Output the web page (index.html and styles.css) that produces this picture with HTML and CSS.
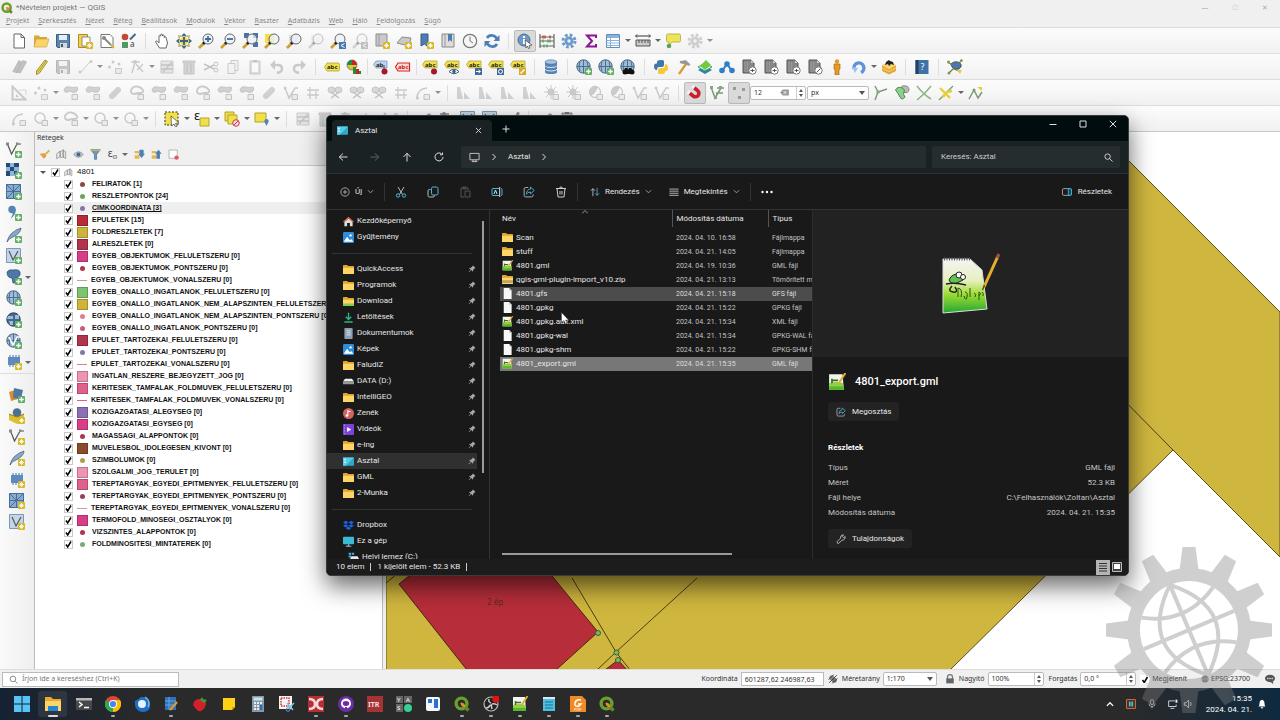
FILE: index.html
```html
<!doctype html>
<html lang="hu">
<head>
    <meta charset="utf-8">
    <title>*Névtelen projekt — QGIS</title>
    <link rel="stylesheet" href="styles.css">
</head>
<body>
<!-- icon set -->
<svg class="defs" aria-hidden="true">
    <symbol id="plus" viewBox="0 0 16 16"><rect x="9" y="9" width="7" height="7" rx="1" fill="#5fae63"/><path d="M12.500 10.200v4.600M10.200 12.500h4.600" stroke="#fff" stroke-width="1.500"/></symbol>
    <symbol id="star" viewBox="0 0 16 16"><rect x="9" y="9" width="7" height="7" rx="1" fill="#d9b92e"/><path d="M12.500 10v5M10 12.500h5M11 11l3 3M14 11l-3 3" stroke="#fff" stroke-width=".8"/></symbol>
    <symbol id="qgis" viewBox="0 0 16 16"><circle cx="7.500" cy="7.500" r="5.400" fill="none" stroke="#6a9f2c" stroke-width="3.400"/><path d="M8 8l6.500 6.500" stroke="#5c8c25" stroke-width="3.600"/><path d="M7 7l4 4" stroke="#ee8d28" stroke-width="2.400"/></symbol>
    <symbol id="new" viewBox="0 0 16 16"><path d="M3 1h7l3.500 3.500V15H3z" fill="#fff" stroke="#666"/><path d="M10 1v3.500h3.500" fill="none" stroke="#666"/></symbol>
    <symbol id="open" viewBox="0 0 16 16"><path d="M1 14V2.500h5l1 1.500h7v2" fill="#d7a93a"/><path d="M1 14L3 6h13l-2.500 8z" fill="#fbd56b" stroke="#c59a31" stroke-width=".6"/></symbol>
    <symbol id="save" viewBox="0 0 16 16"><path d="M1.500 1.500h13v13h-12l-1-1z" fill="#5a83ad" stroke="#3c5f85"/><path d="M4 2h8v5H4z" fill="#e8eef4"/><path d="M5 10h7v5H5z" fill="#d6d9dc"/><path d="M6 11h2v3H6z" fill="#456"/></symbol>
    <symbol id="pagenew" viewBox="0 0 16 16"><path d="M1.500 1.500h9v13h-9z" fill="#f3d34b" stroke="#a88d2a"/><path d="M5 4h8v9H5z" fill="#fff" stroke="#777" stroke-width=".8"/><use href="#star"/></symbol>
    <symbol id="pagetool" viewBox="0 0 16 16"><path d="M2 1.500h9l3 3v10H2z" fill="#fff" stroke="#777"/><path d="M5 5l7 7" stroke="#888" stroke-width="2"/><circle cx="5" cy="5" r="2" fill="#888"/><path d="M12 12l3 3" stroke="#d9b92e" stroke-width="2"/></symbol>
    <symbol id="style" viewBox="0 0 16 16"><circle cx="4" cy="4" r="3.300" fill="#c24a35"/><path d="M1 9h6v6H1z" fill="#4f9a63"/><path d="M14.500 1L9 6.500" stroke="#3d6d86" stroke-width="2"/><text x="9" y="14" font-size="8" fill="#333">a</text></symbol>
    <symbol id="hand" viewBox="0 0 16 16"><path d="M5.500 15L2 9.500C1 8 2.500 7.400 3.500 8.500L5 10V3.200c0-1.200 1.700-1.200 1.700 0V2c0-1.300 1.800-1.300 1.800 0v1c0-1.300 1.800-1.200 1.800 0v1.500c0-1.200 1.700-1.200 1.700 0L13.500 10 12 15z" fill="#fff" stroke="#555" stroke-width=".9"/></symbol>
    <symbol id="pansel" viewBox="0 0 16 16"><path d="M8 0l3 3.500H5zM8 16l3-3.500H5zM0 8l3.500-3v6zM16 8l-3.500-3v6z" fill="#3a5f90"/><path d="M8 2.500L13.500 8 8 13.500 2.500 8z" fill="#f0dc3c"/><path d="M8 4v8M4 8h8" stroke="#3a5f90" stroke-width="1.800"/><path d="M2.500 2.500l2.500.5-2 2zM13.500 2.500L11 3l2 2zM2.500 13.500L5 13l-2-2zM13.500 13.500L11 13l2-2z" fill="#e0cc35" stroke="#9c8f2a" stroke-width=".5"/></symbol>
    <symbol id="lens" viewBox="0 0 16 16"><path d="M6 10l-5 5" stroke="#c9a02c" stroke-width="2.600"/><path d="M6.500 9.500L5 11" stroke="#222" stroke-width="2.600"/><circle cx="10" cy="6" r="5" fill="#e9f1f8" fill-opacity=".75" stroke="#666"/></symbol>
    <symbol id="zin" viewBox="0 0 16 16"><use href="#lens"/><path d="M10 3v6M7 6h6" stroke="#3c6da5" stroke-width="1.800"/></symbol>
    <symbol id="zout" viewBox="0 0 16 16"><use href="#lens"/><path d="M7 6h6" stroke="#3c6da5" stroke-width="1.800"/></symbol>
    <symbol id="zfull" viewBox="0 0 16 16"><path d="M2 0h5v5H2zM11 0h5v5h-5zM11 9h5v5h-5z" fill="#4a73a6"/><use href="#lens"/></symbol>
    <symbol id="zsel" viewBox="0 0 16 16"><path d="M1 1h9v9H1z" fill="#f1e04b"/><use href="#lens"/></symbol>
    <symbol id="zlay" viewBox="0 0 16 16"><path d="M3 2h9v9H3z" fill="#ddd"/><use href="#lens"/></symbol>
    <symbol id="zlast" viewBox="0 0 16 16"><use href="#lens"/><path d="M9 9h7v7H9z" fill="#4679b0"/><path d="M14.500 10.500l-3.500 2 3.500 2" fill="none" stroke="#fff"/></symbol>
    <symbol id="mapnew" viewBox="0 0 16 16"><path d="M2 1h11v12H2z" fill="#c9c9c9" stroke="#8d8d8d"/><path d="M5 1v12" stroke="#999"/><use href="#star"/></symbol>
    <symbol id="map3d" viewBox="0 0 16 16"><path d="M1 10l5-6 9 1-2 8z" fill="#c9c9c9" stroke="#8d8d8d"/><use href="#star"/></symbol>
    <symbol id="bmnew" viewBox="0 0 16 16"><path d="M3 1h7v13l-3.500-3L3 13z" fill="#4f7db1" stroke="#355d8c"/><use href="#star"/></symbol>
    <symbol id="bm" viewBox="0 0 16 16"><path d="M2 1h12v13H2z" fill="#ddd" stroke="#888"/><path d="M8 1h4v8L10 7 8 9z" fill="#4f7db1"/><path d="M5 1v13" stroke="#999"/></symbol>
    <symbol id="clock" viewBox="0 0 16 16"><circle cx="8" cy="8" r="6.700" fill="#f6f6f6" stroke="#777" stroke-width="1.200"/><path d="M8 3.500V8l3 2" fill="none" stroke="#777"/></symbol>
    <symbol id="refresh" viewBox="0 0 16 16"><path d="M13 6.500A5.500 5.500 0 0 0 3 5M3 9.500A5.500 5.500 0 0 0 13 11" fill="none" stroke="#4a80b8" stroke-width="2.600"/><path d="M15.500 2v6h-6zM.5 14V8h6z" fill="#4a80b8"/></symbol>
    <symbol id="ident" viewBox="0 0 16 16"><circle cx="7" cy="7" r="6" fill="#6f98c4" stroke="#44719f"/><path d="M7 6v5M7 3v2" stroke="#fff" stroke-width="2"/><path d="M8 7l7 5-3 .5 1 2.500-1.500.5-1-2.500-1.500 2z" fill="#fff" stroke="#444" stroke-width=".7"/></symbol>
    <symbol id="abacus" viewBox="0 0 16 16"><path d="M1 1v14M15 1v14M1 4h14M1 8h14M1 13h14" stroke="#666" stroke-width="1.200"/><path d="M4 2.500v3M6 2.500v3M11 2.500v3" stroke="#c9453c" stroke-width="1.500"/><path d="M4 6.500v3M9 6.500v3M11 6.500v3M5 11.500v3M8 11.500v3" stroke="#5ba35b" stroke-width="1.500"/></symbol>
    <symbol id="gear" viewBox="0 0 16 16"><circle cx="8" cy="8" r="6" fill="none" stroke="#6c9bcb" stroke-width="3" stroke-dasharray="2.700 2"/><circle cx="8" cy="8" r="4.500" fill="#6c9bcb"/><circle cx="8" cy="8" r="1.700" fill="#eee"/></symbol>
    <symbol id="sigma" viewBox="0 0 16 16"><path d="M13 5V2.500H4L9 8l-5 5.500h9V11" fill="none" stroke="#8a1592" stroke-width="2"/></symbol>
    <symbol id="table" viewBox="0 0 16 16"><path d="M1.500 1.500h13v13h-13z" fill="#fff" stroke="#5d8cbd"/><path d="M2 2h12v3H2z" fill="#8ab3dc"/><path d="M1.500 7.500h13M1.500 10h13M1.500 12.500h13M5.500 5v9" stroke="#8ab3dc"/></symbol>
    <symbol id="ruler" viewBox="0 0 16 16"><path d="M1 3h14M2 1.500L.5 3 2 4.500M14 1.500L15.500 3 14 4.500" fill="none" stroke="#333"/><path d="M1 7h14v6H1z" fill="#c9c9c9" stroke="#555"/><path d="M4 7v3M7 7v3M10 7v3M13 7v3" stroke="#555"/></symbol>
    <symbol id="tip" viewBox="0 0 16 16"><path d="M3 1h11q1.500 0 1.500 1.500v5Q15.500 9 14 9H7l-3 4V9H3Q1.500 9 1.500 7.500v-5Q1.500 1 3 1z" fill="#eee35c" stroke="#b3a733" stroke-width=".8"/><circle cx="4" cy="13" r="2.300" fill="#5ba35b"/></symbol>
    <symbol id="pencil" viewBox="0 0 16 16"><path d="M12 1l2.500 1.500L6.500 14 3.500 15.500V12z" fill="#efd54a" stroke="#8d7a28" stroke-width=".8"/><path d="M5 13l8-11" stroke="#b89d30"/></symbol>
    <symbol id="pencils" viewBox="0 0 16 16"><path d="M2 13L8 2l2 1-5 11M6 14l6-12 3 1-6 11" fill="#777" stroke="#666" stroke-width="1.500"/></symbol>
    <symbol id="line" viewBox="0 0 16 16"><path d="M3 14L13 3" stroke="#888"/><circle cx="3" cy="13" r="1.500" fill="#888"/><circle cx="14" cy="2.500" r="1.500" fill="#888"/></symbol>
    <symbol id="dots" viewBox="0 0 16 16"><g fill="#888"><circle cx="2.500" cy="8" r="1.500"/><circle cx="6" cy="3" r="1.500"/><circle cx="12" cy="5" r="1.500"/></g><path d="M8.500 9.500h6v5h-6z" fill="#ddd" stroke="#888"/></symbol>
    <symbol id="node" viewBox="0 0 16 16"><path d="M2 3h9M6 3L3 14M7 5l7 8M14 5l-6 6" fill="none" stroke="#888" stroke-width="1.400"/><circle cx="6" cy="3" r="2" fill="#888"/></symbol>
    <symbol id="form" viewBox="0 0 16 16"><path d="M2 2h12v12H2z" fill="#ccc" stroke="#888"/><path d="M2 6h12M2 10h12M4 13l9-10" stroke="#777" stroke-width="1.300"/></symbol>
    <symbol id="trash" viewBox="0 0 16 16"><path d="M3 5h10v10H3zM2 2h12v2H2z" fill="#aaa" stroke="#777"/><path d="M6 6v8M10 6v8" stroke="#666"/></symbol>
    <symbol id="cut" viewBox="0 0 16 16"><path d="M1 5l10 5M1 11l10-5" stroke="#777" stroke-width="1.500"/><circle cx="13" cy="5" r="2" fill="none" stroke="#777"/><circle cx="13" cy="11" r="2" fill="none" stroke="#777"/></symbol>
    <symbol id="copy" viewBox="0 0 16 16"><path d="M6 1.500h7v10H6z" fill="#eee" stroke="#888"/><path d="M3 4.500h7v10H3z" fill="#eee" stroke="#888"/></symbol>
    <symbol id="paste" viewBox="0 0 16 16"><path d="M3 2h10v13H3z" fill="#bbb" stroke="#888"/><path d="M5 4h6v9H5z" fill="#fff"/><path d="M6 1h4v2H6z" fill="#777"/></symbol>
    <symbol id="undo" viewBox="0 0 16 16"><path d="M3 6h6q4 0 4 4 0 3-5 4" fill="none" stroke="#888" stroke-width="2.500"/><path d="M6 1v10L1 6z" fill="#888"/></symbol>
    <symbol id="redo" viewBox="0 0 16 16"><use href="#undo" transform="matrix(-1 0 0 1 16 0)"/></symbol>
    <symbol id="abc" viewBox="0 0 16 16"><path d="M3 4h11q1.500 0 1.500 1.500v5Q15.500 12 14 12H3L.5 8z" fill="#f0e14a" stroke="#a99b2c" stroke-width=".7"/><text x="3" y="10" font-size="6" font-weight="bold" fill="#222">abc</text></symbol>
    <symbol id="abcred" viewBox="0 0 16 16"><path d="M3 4h11.500v8H3L.5 8z" fill="#fdd" stroke="#d22" stroke-width="1.200"/><text x="3" y="10" font-size="6" font-weight="bold" fill="#c11">abc</text></symbol>
    <symbol id="abpin" viewBox="0 0 16 16"><path d="M3 2h11v7H3L.5 5.500z" fill="#bcd3ee" stroke="#6b8fba" stroke-width=".7"/><text x="3" y="8" font-size="6" font-weight="bold" fill="#222">ab</text><path d="M11 6v4" stroke="#444"/><circle cx="11.500" cy="12.500" r="3" fill="#a3182b"/></symbol>
    <symbol id="ylab" viewBox="0 0 16 16"><path d="M3 2h12v7H3L.5 5.500z" fill="#f0e14a" stroke="#a99b2c" stroke-width=".7"/><text x="3" y="8" font-size="6" font-weight="bold" fill="#222">abc</text></symbol>
    <symbol id="ypin" viewBox="0 0 16 16"><use href="#ylab"/><circle cx="12" cy="12.500" r="3" fill="#a3182b"/></symbol>
    <symbol id="yeye" viewBox="0 0 16 16"><use href="#ylab"/><path d="M5 12.500q5-4.500 10 0-5 4.500-10 0z" fill="#fff" stroke="#3b5b7c"/><circle cx="10" cy="12.500" r="1.700" fill="#3b5b7c"/></symbol>
    <symbol id="ymove" viewBox="0 0 16 16"><use href="#ylab"/><path d="M9 9h7v7H9z" fill="#41699a"/><path d="M10 12.500h4M12.500 11l2 1.500-2 1.500" stroke="#fff" fill="none"/></symbol>
    <symbol id="yrot" viewBox="0 0 16 16"><use href="#ylab"/><path d="M9 9h7v7H9z" fill="#41699a"/><circle cx="12.500" cy="12.500" r="2" fill="none" stroke="#fff"/></symbol>
    <symbol id="yedit" viewBox="0 0 16 16"><use href="#ylab"/><path d="M9 9h7v7H9z" fill="#d9a92e"/><path d="M10.500 14.500l4-4" stroke="#fff" stroke-width="1.500"/></symbol>
    <symbol id="pie" viewBox="0 0 16 16"><circle cx="6" cy="6" r="5" fill="#e0c52f" stroke="#444" stroke-width=".6"/><path d="M6 6V1a5 5 0 0 1 5 5z" fill="#c22"/><path d="M6 6H1a5 5 0 0 1 5-5z" fill="#285"/><path d="M7 8h3v7H7z" fill="#2a8a3c"/><path d="M10 10h3v5h-3z" fill="#c22"/><path d="M13 12h2v3h-2z" fill="#282"/></symbol>
    <symbol id="db" viewBox="0 0 16 16"><path d="M2 3v10q0 2 6 2t6-2V3z" fill="#5583b4"/><ellipse cx="8" cy="3" rx="6" ry="2.200" fill="#a7c3e0" stroke="#48709c" stroke-width=".6"/><path d="M2 6.500q0 2 6 2t6-2M2 10q0 2 6 2t6-2" fill="none" stroke="#dbe7f3"/></symbol>
    <symbol id="globe" viewBox="0 0 16 16"><circle cx="7.500" cy="7.500" r="6.700" fill="#9dbddd" stroke="#4b6480"/><path d="M7.500 1v13M1 7.500h13M4 2.500q-2 5 0 10M11 2.500q2 5 0 10" fill="none" stroke="#4b6480" stroke-width=".9"/></symbol>
    <symbol id="gplus" viewBox="0 0 16 16"><use href="#globe"/><use href="#plus"/></symbol>
    <symbol id="gbino" viewBox="0 0 16 16"><use href="#globe"/><path d="M3 15l2-6h2l1 2 1-2h2l3 6z" fill="#111"/><circle cx="5" cy="13" r="2.500" fill="#111"/><circle cx="12" cy="13" r="2.500" fill="#111"/></symbol>
    <symbol id="gdark" viewBox="0 0 16 16"><circle cx="7.500" cy="7.500" r="6.700" fill="#46678c" stroke="#2f4259"/><path d="M2 4h5v3H1zM9 3h4v4H9zM3 9h4v4H4zM9 9h3v2H9z" fill="#9dbddd"/><use href="#plus"/></symbol>
    <symbol id="gvec" viewBox="0 0 16 16"><use href="#globe"/><path d="M3 4l4 8 4-8h3" fill="none" stroke="#fff" stroke-width="1.500"/><use href="#plus"/></symbol>
    <symbol id="python" viewBox="0 0 16 16"><path d="M4 8V3q0-2 4-2t3 2v3q0 2-2 2H6q-2 0-2 3-3 0-3-3.500T4 4.500h4" fill="#3f76ab"/><path d="M12 8v5q0 2-4 2t-3-2v-2q0-2 2-2h3q2 0 2-4 3 0 3 4t-3 3" fill="#f4c93c"/></symbol>
    <symbol id="hammer" viewBox="0 0 16 16"><path d="M4 15l7-10" stroke="#d49b33" stroke-width="2.200"/><path d="M5 2.500l6-1 4 4-1.500 1L11 5 5.500 4z" fill="#999" stroke="#777" stroke-width=".5"/></symbol>
    <symbol id="layers" viewBox="0 0 16 16"><path d="M1 11l7-4 7 4-7 4z" fill="#2c84a8"/><path d="M1 8l7-4 7 4-7 4z" fill="#e6efe8" stroke="#3a9b6f"/><path d="M3 7l6-6 5 5-6 5z" fill="#72c942"/></symbol>
    <symbol id="molec" viewBox="0 0 16 16"><path d="M3 12l5-7 5 7" fill="none" stroke="#2f80c2" stroke-width="2"/><circle cx="3" cy="11.500" r="2.800" fill="#2f80c2"/><circle cx="8" cy="5" r="2.800" fill="#2f80c2"/><circle cx="13" cy="11.500" r="2.800" fill="#2f80c2"/></symbol>
    <symbol id="dark" viewBox="0 0 16 16"><path d="M2 1h8l3 3v10H2z" fill="#888" stroke="#555"/><path d="M10 1v3h3" fill="#ccc"/><path d="M4 3v10M6.500 3v10" stroke="#999"/><circle cx="11.500" cy="11.500" r="3.700" fill="#fff" stroke="#777"/><path d="M9.500 11.500h4M11.500 10v3" stroke="#555"/></symbol>
    <symbol id="dark2" viewBox="0 0 16 16"><path d="M2 1h8l3 3v10H2z" fill="#888" stroke="#555"/><path d="M10 1v3h3" fill="#ccc"/><path d="M4 3v10M6.500 3v10" stroke="#999"/><circle cx="11.500" cy="11.500" r="3.700" fill="#fff" stroke="#777"/><path d="M9.500 13.500l4-4" stroke="#555"/></symbol>
    <symbol id="person" viewBox="0 0 16 16"><circle cx="8" cy="2.500" r="2.200" fill="#e59a26"/><path d="M5 5h6v5l-1 .5V16H6v-5.500L5 10z" fill="#e59a26" stroke="#a86b12" stroke-width=".7"/></symbol>
    <symbol id="swirl" viewBox="0 0 16 16"><path d="M3 10a5 5 0 1 1 7 3.500" fill="none" stroke="#5b93dd" stroke-width="3.400"/><path d="M1 8l6 1-3 5z" fill="#9ec3f2"/></symbol>
    <symbol id="box" viewBox="0 0 16 16"><path d="M1 6l7 4 7-4v6l-7 3.500L1 12z" fill="#e3a936"/><path d="M1 6l7-3 7 3-7 4z" fill="#f7d375"/><path d="M4 6l1-3 3-2 1 1 3 1 1 3-3-1-2 2-1-2z" fill="#222"/><path d="M1 9l7 3.500L15 9" fill="none" stroke="#f7d375"/></symbol>
    <symbol id="book" viewBox="0 0 16 16"><path d="M1.500 1h13v14h-13z" fill="#3f72a6"/><path d="M1.500 1h3v14h-3z" fill="#22405f"/><text x="6.500" y="11" font-size="9" fill="#fff">?</text></symbol>
    <symbol id="bird" viewBox="0 0 16 16"><path d="M4 5q4-4 9-1 3 3-1 6-4 1-6-1T4 5z" fill="#4b79ab" stroke="#335" stroke-width=".7"/><path d="M1 3l4 3M15 1l-4 4M2 14l5-5M7 10l5 2" stroke="#6d7f45" stroke-width="1.200" fill="none"/><circle cx="1.500" cy="3" r="1.500" fill="#7b9a5a"/><circle cx="2" cy="14" r="1.500" fill="#7b9a5a"/><circle cx="14.500" cy="1.500" r="1.300" fill="#7b9a5a"/><path d="M10 11h5l-2 4z" fill="#e8c93a"/></symbol>
    <symbol id="tri" viewBox="0 0 16 16"><path d="M1.500 1.500v13h13z" fill="none" stroke="#888" stroke-width="2"/><path d="M5 9v3h3z" fill="#888"/><path d="M8 5h7v5" fill="none" stroke="#aaa"/></symbol>
    <symbol id="blob" viewBox="0 0 16 16"><path d="M1 5q1-4 5-3t8 0q2 2-1 5-4 1-6-1Q2 9 1 5z" fill="#999" stroke="#777"/><path d="M9 9.500h5.500v5H9z" fill="#ddd" stroke="#777"/></symbol>
    <symbol id="blobo" viewBox="0 0 16 16"><path d="M2 5q2-4 6-3.500T14 5q1 3-3 3T6 9Q1 9 2 5z" fill="none" stroke="#888" stroke-width="1.800"/><path d="M9 9.500h5.500v5H9z" fill="#ddd" stroke="#777"/></symbol>
    <symbol id="pair" viewBox="0 0 16 16"><ellipse cx="4.500" cy="5" rx="3.500" ry="3" fill="#aaa" stroke="#777"/><ellipse cx="11.500" cy="5" rx="3.500" ry="3" fill="#aaa" stroke="#777"/><path d="M4 13l8-6M12 13L4 7" stroke="#777" stroke-width="1.500"/></symbol>
    <symbol id="sausage" viewBox="0 0 16 16"><path d="M5 11l6-6" stroke="#999" stroke-width="6" stroke-linecap="round"/></symbol>
    <symbol id="vee" viewBox="0 0 16 16"><path d="M2 3l4 10L12 3h3" fill="none" stroke="#888" stroke-width="1.500"/><circle cx="2" cy="3" r="1.500" fill="#888"/><path d="M9 9.500h5.500v5H9z" fill="#ddd" stroke="#777"/></symbol>
    <symbol id="cross" viewBox="0 0 16 16"><path d="M2 5h12M5 2v12M11 6v8M2 10h12" stroke="#888" stroke-width="1.300"/></symbol>
    <symbol id="circ" viewBox="0 0 16 16"><circle cx="7" cy="7" r="5" fill="none" stroke="#888" stroke-width="1.500"/><path d="M9 9.500h5.500v5H9z" fill="#ddd" stroke="#777"/></symbol>
    <symbol id="half" viewBox="0 0 16 16"><circle cx="7" cy="7" r="5.500" fill="none" stroke="#888" stroke-width="1.300"/><path d="M3 11Q7 9 10 2.500 5 0 2.500 4T3 11z" fill="#888"/><path d="M9 9.500h5.500v5H9z" fill="#ddd" stroke="#777"/></symbol>
    <symbol id="sun" viewBox="0 0 16 16"><path d="M7 0v14M0 7h14M2 2l10 10M12 2L2 12" stroke="#888"/><circle cx="7" cy="7" r="3.500" fill="#888"/><path d="M9 9.500h5.500v5H9z" fill="#ddd" stroke="#777"/></symbol>
    <symbol id="peaks" viewBox="0 0 16 16"><path d="M1 14V2h3l3 12zM8 14V7l6 7z" fill="#999"/></symbol>
    <symbol id="arc" viewBox="0 0 16 16"><path d="M2 13Q2 4 12 3" fill="none" stroke="#888" stroke-width="1.500"/><circle cx="2.500" cy="13" r="1.500" fill="#888"/><path d="M9 9.500h5.500v5H9z" fill="#ddd" stroke="#777"/></symbol>
    <symbol id="magnet" viewBox="0 0 16 16"><g transform="rotate(-50 8 8)" fill="none" stroke-width="3.600"><path d="M4.500 4v4.500a3.500 3.500 0 0 0 7 0V4" stroke="#c9202c"/><path d="M4.500 1.500v2.500M11.500 1.500v2.500" stroke="#f4f4f4"/></g></symbol>
    <symbol id="vgreen" viewBox="0 0 16 16"><path d="M2 2l4 11L12 3M7 8h7M8 3h7" fill="none" stroke="#7a9a72" stroke-width="1.500"/><path d="M1 1h3v3H1zM10 1h3v3h-3zM5 11h3v3H5z" fill="#8aa583"/></symbol>
    <symbol id="sq3" viewBox="0 0 16 16"><path d="M2 2h3v3H2zM11 3h3v3h-3zM7 11h3v3H7z" fill="#999"/></symbol>
    <symbol id="topo" viewBox="0 0 16 16"><path d="M3 1l3 6M3 15l3-8 9-3" fill="none" stroke="#7a9a72" stroke-width="1.400"/><path d="M4.500 5.500h3v3h-3z" fill="#8aa583"/></symbol>
    <symbol id="bean" viewBox="0 0 16 16"><path d="M8 1q7-1 7 3.500T8 7z" fill="#bbb" stroke="#888"/><path d="M1.500 5q2-4 7-2 3 2 1.500 4t1 5q-3 4-5 0T1.500 5z" fill="#8fce8f" stroke="#4b8a4b"/></symbol>
    <symbol id="xg" viewBox="0 0 16 16"><path d="M1 1q6 8 14 13M15 1Q9 9 1 15" fill="none" stroke="#8db583" stroke-width="1.500"/></symbol>
    <symbol id="xy" viewBox="0 0 16 16"><path d="M1 15L15 1" stroke="#7a9a72" stroke-width="1.300"/><path d="M2 3l5 5 5 5M5 12l4-5 5-1" fill="none" stroke="#e5cf34" stroke-width="2.400"/></symbol>
    <symbol id="trace" viewBox="0 0 16 16"><path d="M1 14l5-9 4 8 4-6" fill="none" stroke="#7a9a72" stroke-width="1.500"/><path d="M9 2h5v4z" fill="#e5cf34"/><circle cx="6" cy="5" r="1.500" fill="#7a9a72"/></symbol>
    <symbol id="sel" viewBox="0 0 16 16"><path d="M1 1h13v13H1z" fill="#f0e14a" stroke="#333" stroke-dasharray="2 1.500"/><path d="M7 5l8 7-3.500.3 1.500 3-1.500.7-1.500-3L7.500 15z" fill="#fff" stroke="#444" stroke-width=".7"/></symbol>
    <symbol id="selexp" viewBox="0 0 16 16"><text x="0" y="9" font-size="13" fill="#222">ε</text><path d="M6 7h9v8H6z" fill="#f0e14a" stroke="#b3a32c"/></symbol>
    <symbol id="desel" viewBox="0 0 16 16"><path d="M1 1h9v9H1z" fill="#f0d94a" stroke="#b3a32c"/><path d="M4 4h9v9H4z" fill="#f0e14a" stroke="#b3a32c"/><circle cx="12" cy="12" r="3.300" fill="#fbdada" stroke="#cc3a4a"/><path d="M10 14l4-4" stroke="#cc3a4a"/></symbol>
    <symbol id="selloc" viewBox="0 0 16 16"><path d="M1 2h11v9H1z" fill="#f0e14a" stroke="#b3a32c"/><path d="M12.500 15L10.500 11a2.200 2.200 0 1 1 4 0z" fill="#5482b5"/></symbol>
    <symbol id="lvec" viewBox="0 0 16 16"><path d="M1.500 2l4 10L11 2h4" fill="none" stroke="#555" stroke-width="1.200"/><path d="M0 .5h3v3H0zM10 .5h2.500V3H10z" fill="#888"/></symbol>
    <symbol id="vecadd" viewBox="0 0 16 16"><use href="#lvec"/><use href="#plus"/></symbol>
    <symbol id="vecnew" viewBox="0 0 16 16"><use href="#lvec"/><use href="#star"/></symbol>
    <symbol id="rasadd" viewBox="0 0 16 16"><path d="M0 0h13v13H0z" fill="#8db4da"/><path d="M0 0h4v4H0zM8 0h5v4H8zM4 4h4v4H4zM0 8h4v5H0zM8 8h3v3H8z" fill="#264a70"/><use href="#plus"/></symbol>
    <symbol id="mesh" viewBox="0 0 16 16"><path d="M.5 .5h14v14H.5z" fill="#86acd3" stroke="#4a6d92"/><path d="M.5 7.500h14M7.500.5v14M.5.5l7 7 7-7M7.500 7.500l-7 7" stroke="#4a6d92" fill="none"/></symbol>
    <symbol id="meshadd" viewBox="0 0 16 16"><use href="#mesh"/><use href="#plus"/></symbol>
    <symbol id="meshnew" viewBox="0 0 16 16"><use href="#mesh"/><use href="#star"/></symbol>
    <symbol id="comma" viewBox="0 0 16 16"><circle cx="6" cy="4.500" r="3.700" fill="#5583b4"/><path d="M9.500 4q1 6-5 9.500Q8 9 6 6z" fill="#5583b4"/><use href="#plus"/></symbol>
    <symbol id="feather" viewBox="0 0 16 16"><path d="M1 15Q3 5 15 1q0 5-8 9-4 1-6 5z" fill="#88a9cb" stroke="#4a5f76" stroke-width=".8"/></symbol>
    <symbol id="feaadd" viewBox="0 0 16 16"><use href="#feather"/><use href="#plus"/></symbol>
    <symbol id="feanew" viewBox="0 0 16 16"><use href="#feather"/><use href="#star"/></symbol>
    <symbol id="vbox" viewBox="0 0 16 16"><path d="M.5 .5h14v14H.5z" fill="#c3d6e9" stroke="#7d98b4"/><path d="M3 3l4 9 5-9" fill="none" stroke="#555" stroke-width="1.200"/></symbol>
    <symbol id="vboxadd" viewBox="0 0 16 16"><use href="#vbox"/><use href="#plus"/></symbol>
    <symbol id="vboxnew" viewBox="0 0 16 16"><use href="#vbox"/><use href="#star"/></symbol>
    <symbol id="pg" viewBox="0 0 16 16"><path d="M1 3q2-3 6-2 6-1 7 2 1 5-4 6v5H7l-1-5Q1 9 1 3z" fill="#4d79a8" stroke="#2c4b6b" stroke-width=".7"/><use href="#plus"/></symbol>
    <symbol id="chip" viewBox="0 0 16 16"><path d="M2 3h12v8H2z" fill="#5d8bbd"/><path d="M4 1v12M7 1v12M10 1v12M13 1v12" stroke="#5d8bbd" stroke-width="1.200"/><use href="#star"/></symbol>
    <symbol id="stack" viewBox="0 0 16 16"><path d="M0 5l6-2 3 9-7 2z" fill="#d98d2b"/><path d="M5 1l9 2-2 9-8-1z" fill="#4d78a5"/><use href="#plus"/></symbol>
    <symbol id="gpkg" viewBox="0 0 16 16"><path d="M0 6l8 3 7-3v7l-7 3-8-4z" fill="#ddbf2f"/><circle cx="8" cy="4.500" r="4.300" fill="#4a7192"/><path d="M0 6l8 3 7-3" fill="none" stroke="#8b7a1c"/><use href="#star"/></symbol>
    <symbol id="brush" viewBox="0 0 16 16"><path d="M15 2L9 8" stroke="#d9b02b" stroke-width="2.500"/><path d="M1 7l7-1 3 4-4 4z" fill="#e69a4a"/></symbol>
    <symbol id="group" viewBox="0 0 16 16"><path d="M1 14V7l5-4v8zM6 12V4l5-3v11zM10 11V2l4 2v10z" fill="#e9e9e9" stroke="#888"/></symbol>
    <symbol id="eye" viewBox="0 0 16 16"><path d="M1 8q7-8 14 0-7 8-14 0z" fill="#c7d2de" stroke="#777"/><circle cx="8" cy="8" r="3" fill="#46668b"/></symbol>
    <symbol id="filter" viewBox="0 0 16 16"><path d="M1 1h14L9.500 8v7h-3V8z" fill="#6b97c5" stroke="#476d97"/><path d="M1 1h14v2H1z" fill="#d4b542"/></symbol>
    <symbol id="eps" viewBox="0 0 16 16"><text x="1" y="12" font-size="15" fill="#444">ε</text><path d="M9 9.500h5v4H9z" fill="#ddd" stroke="#777"/></symbol>
    <symbol id="expand" viewBox="0 0 16 16"><path d="M1 3h7v3H1zM1 9h7v5H1z" fill="#e3b94a"/><path d="M8 1h6v6h2l-5 6-5-6h2z" fill="#4d7fb5"/></symbol>
    <symbol id="collapse" viewBox="0 0 16 16"><path d="M1 3h7v3H1zM1 9h7v5H1z" fill="#e3b94a"/><path d="M8 14h5V7h2.500L11 1 6 7h2z" fill="#4d7fb5"/></symbol>
    <symbol id="remove" viewBox="0 0 16 16"><path d="M1.500 1.500h12v12h-12z" fill="#fff" stroke="#999"/><circle cx="12.500" cy="12.500" r="3.200" fill="#de5b68"/></symbol>
    <!-- explorer icons -->
    <symbol id="folder" viewBox="0 0 16 14"><path d="M0 1.500Q0 .5 1 .5h5L7.500 2H15q1 0 1 1v10H0z" fill="#e0a52b"/><path d="M0 4.500h16V13q0 .5-1 .5H1q-1 0-1-.5z" fill="#fcd566"/></symbol>
    <symbol id="folderdl" viewBox="0 0 16 14"><use href="#folder"/><path d="M0 10h16v3q0 .5-1 .5H1q-1 0-1-.5z" fill="#7ed04b"/></symbol>
    <symbol id="zip" viewBox="0 0 16 14"><use href="#folder"/><path d="M0 8h16v4H0z" fill="#b9a46b"/></symbol>
    <symbol id="file" viewBox="0 0 16 16"><path d="M2.500 0h8l3.500 3.500V16H2.500z" fill="#f7f7f7"/><path d="M10.500 0v3.500H14z" fill="#b5b5b5"/></symbol>
    <symbol id="npp" viewBox="0 0 16 16"><path d="M1 1h12l1 14H1z" fill="#f1f5ea"/><path d="M1 9q6-2 12.500 0l.5 6H1z" fill="#8ed04a"/><path d="M1 12h13v3H1z" fill="#55b82a"/><path d="M3.500 5v4M4 6.500h5" stroke="#3c6a2c" stroke-width="1.500"/><path d="M15.500 0L9 10" stroke="#e2ad2d" stroke-width="1.800"/></symbol>
    <symbol id="home" viewBox="0 0 16 16"><path d="M2 8v7h4v-5h4v5h4V8L8 3z" fill="#ddd"/><path d="M0 8l8-7 8 7-1.500 1.500L8 4 1.500 9.500z" fill="#c9663f"/></symbol>
    <symbol id="pics" viewBox="0 0 16 16"><rect width="16" height="16" rx="2" fill="#2c8ddb"/><path d="M1 14l5-7 4 5 2-2 3 4z" fill="#fff"/><circle cx="11" cy="5" r="1.700" fill="#fff"/></symbol>
    <symbol id="dl" viewBox="0 0 16 16"><path d="M8 1v9M4 7l4 4 4-4M2 14.500h12" fill="none" stroke="#2bb587" stroke-width="2"/></symbol>
    <symbol id="doc" viewBox="0 0 16 16"><rect x="2" width="12" height="16" rx="1" fill="#8ca0b3"/><path d="M5 4h6M5 7h6M5 10h6" stroke="#fff"/></symbol>
    <symbol id="drive" viewBox="0 0 16 16"><path d="M3 4h10l3 4H0z" fill="#eee"/><path d="M0 8h16v4H0z" fill="#999"/></symbol>
    <symbol id="sysdrive" viewBox="0 0 16 16"><path d="M1 1h3.500v3H1zM5.500 1H9v3H5.500zM1 5h3.500v3H1z" fill="#42b4e6"/><path d="M5 6h9l2 4H3z" fill="#eee"/><path d="M3 10h13v4H3z" fill="#8fa3ad"/></symbol>
    <symbol id="music" viewBox="0 0 16 16"><circle cx="8" cy="8" r="8" fill="#d4625e"/><path d="M7 11V4l4 1.500" fill="none" stroke="#fff" stroke-width="1.500"/><circle cx="5.800" cy="11" r="1.800" fill="#fff"/></symbol>
    <symbol id="video" viewBox="0 0 16 16"><rect width="16" height="16" rx="1" fill="#7c44d6"/><path d="M6 4.500v7l6-3.500z" fill="#fff"/><path d="M2 1v14" stroke="#cdb4f5" stroke-dasharray="2 2"/></symbol>
    <symbol id="desk" viewBox="0 0 16 16"><rect y="2" width="16" height="12" rx="1" fill="#2ca9cb"/><path d="M0 2h16L4 14H0z" fill="#57cbe3"/><path d="M2 4h2v2H2zM2 8h2v2H2z" fill="#fff"/></symbol>
    <symbol id="dropbox" viewBox="0 0 16 16"><path d="M4 1l4 2.500L4 6 0 3.500zM12 1l4 2.500L12 6 8 3.500zM4 6l4 2.500L4 11 0 8.500zM12 6l4 2.500-4 2.500-4-2.500zM8 9.500l4 2.500-4 2.500L4 12z" fill="#1a62e6"/></symbol>
    <symbol id="pc" viewBox="0 0 16 16"><rect y="1" width="16" height="11" rx="1" fill="#3bbad4"/><path d="M7 12h2v2h3v1.500H4V14h3z" fill="#9bd"/></symbol>
    <symbol id="pin" viewBox="0 0 16 16"><path d="M10 1l5 5-2 1-2.500 2.500-.5 4L6.500 10 2 14.500 1 14l4.500-4.500L2 6l4-.5L8.500 3z" fill="#a9a9a9"/></symbol>
    <symbol id="chev" viewBox="0 0 8 8"><path d="M1 2.500l3 3 3-3" fill="none" stroke="#aaa"/></symbol>
    <symbol id="share" viewBox="0 0 16 16"><path d="M7 2H3.500Q1.500 2 1.500 4v8.500q0 2 2 2h8q2 0 2-2V11" fill="none" stroke="#bbb" stroke-width="1.200"/><path d="M10 1.500L15 6l-5 4.500V8Q6 8 4.500 11 5 4.500 10 4z" fill="none" stroke="#4cb6de" stroke-width="1.200"/></symbol>
</svg>

<div class="screen">
    <header class="title">
        <svg class="logo"><use href="#qgis"/></svg>
        <h1>*Névtelen projekt — QGIS</h1>
        <div class="wbtn"><span>—</span><span>□</span><span>✕</span></div>
    </header>
    <nav class="menu">
        <a href="#">Projekt</a><a href="#">Szerkesztés</a><a href="#">Nézet</a><a href="#">Réteg</a><a href="#">Beállítások</a><a href="#">Modulok</a><a href="#">Vektor</a><a href="#">Raszter</a><a href="#">Adatbázis</a><a href="#">Web</a><a href="#">Háló</a><a href="#">Feldolgozás</a><a href="#">Súgó</a>
    </nav>

    <div class="bar">
        <button class="tb"><svg><use href="#new"/></svg></button>
        <button class="tb"><svg><use href="#open"/></svg></button>
        <button class="tb"><svg><use href="#save"/></svg></button>
        <button class="tb"><svg><use href="#pagenew"/></svg></button>
        <button class="tb"><svg><use href="#pagetool"/></svg></button>
        <button class="tb"><svg><use href="#style"/></svg></button>
        <i class="sep"></i>
        <button class="tb"><svg><use href="#hand"/></svg></button>
        <button class="tb"><svg><use href="#pansel"/></svg></button>
        <button class="tb"><svg><use href="#zin"/></svg></button>
        <button class="tb"><svg><use href="#zout"/></svg></button>
        <button class="tb"><svg><use href="#zfull"/></svg></button>
        <button class="tb"><svg><use href="#zsel"/></svg></button>
        <button class="tb"><svg><use href="#zlay"/></svg></button>
        <button class="tb off"><svg><use href="#zlay"/></svg></button>
        <button class="tb"><svg><use href="#zlast"/></svg></button>
        <button class="tb off"><svg><use href="#zlast"/></svg></button>
        <button class="tb"><svg><use href="#mapnew"/></svg></button>
        <button class="tb"><svg><use href="#map3d"/></svg></button>
        <button class="tb"><svg><use href="#bmnew"/></svg></button>
        <button class="tb"><svg><use href="#bm"/></svg></button>
        <button class="tb"><svg><use href="#clock"/></svg></button>
        <button class="tb"><svg><use href="#refresh"/></svg></button>
        <i class="sep"></i>
        <button class="tb on"><svg><use href="#ident"/></svg></button>
        <button class="tb"><svg><use href="#abacus"/></svg></button>
        <button class="tb"><svg><use href="#gear"/></svg></button>
        <button class="tb"><svg><use href="#sigma"/></svg></button>
        <button class="tb drop"><svg><use href="#table"/></svg></button>
        <button class="tb drop"><svg><use href="#ruler"/></svg></button>
        <button class="tb"><svg><use href="#tip"/></svg></button>
        <button class="tb drop off"><svg><use href="#gear"/></svg></button>
    </div>

    <div class="bar">
        <button class="tb off"><svg><use href="#pencils"/></svg></button>
        <button class="tb"><svg><use href="#pencil"/></svg></button>
        <button class="tb off"><svg><use href="#save"/></svg></button>
        <button class="tb drop off"><svg><use href="#line"/></svg></button>
        <button class="tb off"><svg><use href="#dots"/></svg></button>
        <button class="tb drop off"><svg><use href="#node"/></svg></button>
        <button class="tb off"><svg><use href="#form"/></svg></button>
        <button class="tb off"><svg><use href="#trash"/></svg></button>
        <button class="tb off"><svg><use href="#cut"/></svg></button>
        <button class="tb off"><svg><use href="#copy"/></svg></button>
        <button class="tb off"><svg><use href="#paste"/></svg></button>
        <button class="tb off"><svg><use href="#undo"/></svg></button>
        <button class="tb off"><svg><use href="#redo"/></svg></button>
        <i class="sep"></i>
        <button class="tb"><svg><use href="#abc"/></svg></button>
        <button class="tb"><svg><use href="#pie"/></svg></button>
        <i class="sep thin"></i>
        <button class="tb"><svg><use href="#abpin"/></svg></button>
        <button class="tb"><svg><use href="#abcred"/></svg></button>
        <i class="sep thin"></i>
        <button class="tb"><svg><use href="#ypin"/></svg></button>
        <button class="tb"><svg><use href="#yeye"/></svg></button>
        <button class="tb"><svg><use href="#ymove"/></svg></button>
        <button class="tb"><svg><use href="#yrot"/></svg></button>
        <button class="tb"><svg><use href="#yedit"/></svg></button>
        <i class="sep"></i>
        <button class="tb"><svg><use href="#db"/></svg></button>
        <i class="sep"></i>
        <button class="tb"><svg><use href="#gplus"/></svg></button>
        <button class="tb"><svg><use href="#gplus"/></svg></button>
        <button class="tb"><svg><use href="#gbino"/></svg></button>
        <i class="sep"></i>
        <button class="tb"><svg><use href="#python"/></svg></button>
        <button class="tb"><svg><use href="#hammer"/></svg></button>
        <button class="tb"><svg><use href="#layers"/></svg></button>
        <button class="tb"><svg><use href="#molec"/></svg></button>
        <button class="tb"><svg><use href="#dark"/></svg></button>
        <button class="tb"><svg><use href="#dark"/></svg></button>
        <button class="tb"><svg><use href="#dark"/></svg></button>
        <button class="tb"><svg><use href="#dark2"/></svg></button>
        <button class="tb"><svg><use href="#person"/></svg></button>
        <button class="tb drop"><svg><use href="#swirl"/></svg></button>
        <button class="tb"><svg><use href="#box"/></svg></button>
        <i class="sep"></i>
        <button class="tb"><svg><use href="#book"/></svg></button>
        <i class="sep"></i>
        <button class="tb"><svg><use href="#bird"/></svg></button>
    </div>

    <div class="bar">
        <button class="tb off"><svg><use href="#tri"/></svg></button>
        <button class="tb drop off"><svg><use href="#dots"/></svg></button>
        <button class="tb off"><svg><use href="#blob"/></svg></button>
        <button class="tb off"><svg><use href="#blob"/></svg></button>
        <button class="tb off"><svg><use href="#sausage"/></svg></button>
        <button class="tb off"><svg><use href="#blobo"/></svg></button>
        <button class="tb off"><svg><use href="#blob"/></svg></button>
        <button class="tb off"><svg><use href="#blob"/></svg></button>
        <button class="tb off"><svg><use href="#blobo"/></svg></button>
        <button class="tb off"><svg><use href="#blob"/></svg></button>
        <button class="tb off"><svg><use href="#blob"/></svg></button>
        <button class="tb off"><svg><use href="#sausage"/></svg></button>
        <button class="tb off"><svg><use href="#vee"/></svg></button>
        <button class="tb off"><svg><use href="#cross"/></svg></button>
        <button class="tb off"><svg><use href="#pair"/></svg></button>
        <button class="tb off"><svg><use href="#pair"/></svg></button>
        <button class="tb off"><svg><use href="#pair"/></svg></button>
        <button class="tb off"><svg><use href="#cross"/></svg></button>
        <button class="tb drop off"><svg><use href="#arc"/></svg></button>
        <i class="sep"></i>
        <button class="tb off"><svg><use href="#peaks"/></svg></button>
        <button class="tb off"><svg><use href="#peaks"/></svg></button>
        <button class="tb off"><svg><use href="#peaks"/></svg></button>
        <button class="tb off"><svg><use href="#peaks"/></svg></button>
        <button class="tb off"><svg><use href="#sun"/></svg></button>
        <button class="tb off"><svg><use href="#sun"/></svg></button>
        <button class="tb off"><svg><use href="#half"/></svg></button>
        <button class="tb off"><svg><use href="#half"/></svg></button>
        <button class="tb off"><svg><use href="#vee"/></svg></button>
        <button class="tb off"><svg><use href="#vee"/></svg></button>
        <i class="sep"></i>
        <button class="tb on"><svg><use href="#magnet"/></svg></button>
        <button class="tb"><svg><use href="#vgreen"/></svg></button>
        <button class="tb on"><svg><use href="#sq3"/></svg></button>
        <span class="spin tol"><input type="text" value="12" aria-label="Tűrés"><svg class="clear" viewBox="0 0 10 8"><path d="M0 4l3-3.500h7v7H3z" fill="#999"/><path d="M4 2.500l3 3M7 2.500l-3 3" stroke="#fff"/></svg><i class="ud"></i></span>
        <select class="unit" aria-label="Egység"><option>px</option></select>
        <button class="tb"><svg><use href="#topo"/></svg></button>
        <button class="tb"><svg><use href="#bean"/></svg></button>
        <button class="tb"><svg><use href="#xg"/></svg></button>
        <button class="tb drop"><svg><use href="#xy"/></svg></button>
        <button class="tb"><svg><use href="#trace"/></svg></button>
    </div>

    <div class="bar">
        <button class="tb off"><svg><use href="#arc"/></svg></button>
        <button class="tb drop off"><svg><use href="#circ"/></svg></button>
        <button class="tb drop off"><svg><use href="#blobo"/></svg></button>
        <button class="tb drop off"><svg><use href="#circ"/></svg></button>
        <button class="tb drop off"><svg><use href="#circ"/></svg></button>
        <i class="sep"></i>
        <button class="tb drop"><svg><use href="#sel"/></svg></button>
        <button class="tb drop"><svg><use href="#selexp"/></svg></button>
        <button class="tb drop"><svg><use href="#desel"/></svg></button>
        <button class="tb drop"><svg><use href="#selloc"/></svg></button>
        <i class="sep"></i>
        <button class="tb off"><svg><use href="#form"/></svg></button>
        <button class="tb off"><svg><use href="#trash"/></svg></button>
        <button class="tb off"><svg><use href="#node"/></svg></button>
        <button class="tb off"><svg><use href="#cross"/></svg></button>
        <button class="tb off"><svg><use href="#vee"/></svg></button>
        <i class="sep"></i>
        <button class="tb"><svg><use href="#cut"/></svg></button>
        <button class="tb"><svg><use href="#node"/></svg></button>
        <button class="tb"><svg><use href="#vbox"/></svg></button>
        <button class="tb"><svg><use href="#vbox"/></svg></button>
        <button class="tb"><svg><use href="#line"/></svg></button>
        <i class="sep"></i>
        <button class="tb"><svg><use href="#cut"/></svg></button>
        <button class="tb"><svg><use href="#paste"/></svg></button>
    </div>

    <main class="work">
        <div class="side">
            <div class="side-a">
                <button><svg><use href="#vecadd"/></svg></button>
                <button><svg><use href="#rasadd"/></svg></button>
                <button><svg><use href="#meshadd"/></svg></button>
                <button><svg><use href="#comma"/></svg></button>
                <button><svg><use href="#feaadd"/></svg></button>
                <button><svg><use href="#vboxadd"/></svg></button>
                <button class="more"><svg><use href="#pg"/></svg></button>
                <button><svg><use href="#gplus"/></svg></button>
                <button><svg><use href="#gdark"/></svg></button>
                <button><svg><use href="#gvec"/></svg></button>
                <button class="more"><svg><use href="#chip"/></svg></button>
            </div>
            <div class="side-b">
                <button><svg><use href="#stack"/></svg></button>
                <button><svg><use href="#gpkg"/></svg></button>
                <button><svg><use href="#vecnew"/></svg></button>
                <button><svg><use href="#feanew"/></svg></button>
                <button><svg><use href="#chip"/></svg></button>
                <button><svg><use href="#meshnew"/></svg></button>
                <button><svg><use href="#vboxnew"/></svg></button>
            </div>
        </div>

        <section class="panel">
            <h2>Rétegek</h2>
            <div class="ptools">
                <button><svg><use href="#brush"/></svg></button>
                <button><svg><use href="#group"/></svg></button>
                <button><svg><use href="#eye"/></svg></button>
                <button><svg><use href="#filter"/></svg></button>
                <button class="pdrop"><svg><use href="#eps"/></svg></button>
                <button><svg><use href="#expand"/></svg></button>
                <button><svg><use href="#collapse"/></svg></button>
                <button><svg><use href="#remove"/></svg></button>
            </div>
            <div class="tree">
                <label class="root"><i class="tw"></i><input type="checkbox" checked><svg><use href="#group"/></svg>4801</label>
                <label><input type="checkbox" checked><i class="pt c1"></i>FELIRATOK [1]</label>
                <label><input type="checkbox" checked><i class="pt c2"></i>RESZLETPONTOK [24]</label>
                <label class="cur"><input type="checkbox" checked><i class="pt c3"></i><u>CIMKOORDINATA [3]</u></label>
                <label><input type="checkbox" checked><i class="sq c4"></i>EPULETEK [15]</label>
                <label><input type="checkbox" checked><i class="sq c5"></i>FOLDRESZLETEK [7]</label>
                <label><input type="checkbox" checked><i class="sq c6"></i>ALRESZLETEK [0]</label>
                <label><input type="checkbox" checked><i class="sq c7"></i>EGYEB_OBJEKTUMOK_FELULETSZERU [0]</label>
                <label><input type="checkbox" checked><i class="pt c6"></i>EGYEB_OBJEKTUMOK_PONTSZERU [0]</label>
                <label><input type="checkbox" checked><i class="ln c8"></i>EGYEB_OBJEKTUMOK_VONALSZERU [0]</label>
                <label><input type="checkbox" checked><i class="sq c9"></i>EGYEB_ONALLO_INGATLANOK_FELULETSZERU [0]</label>
                <label><input type="checkbox" checked><i class="sq c5"></i>EGYEB_ONALLO_INGATLANOK_NEM_ALAPSZINTEN_FELULETSZERU [0]</label>
                <label><input type="checkbox" checked><i class="pt c10"></i>EGYEB_ONALLO_INGATLANOK_NEM_ALAPSZINTEN_PONTSZERU [0]</label>
                <label><input type="checkbox" checked><i class="pt c11"></i>EGYEB_ONALLO_INGATLANOK_PONTSZERU [0]</label>
                <label><input type="checkbox" checked><i class="sq c6"></i>EPULET_TARTOZEKAI_FELULETSZERU [0]</label>
                <label><input type="checkbox" checked><i class="pt c3"></i>EPULET_TARTOZEKAI_PONTSZERU [0]</label>
                <label><input type="checkbox" checked><i class="ln c10"></i>EPULET_TARTOZEKAI_VONALSZERU [0]</label>
                <label><input type="checkbox" checked><i class="sq c12"></i>INGATLAN_RESZERE_BEJEGYZETT_JOG [0]</label>
                <label><input type="checkbox" checked><i class="sq c13"></i>KERITESEK_TAMFALAK_FOLDMUVEK_FELULETSZERU [0]</label>
                <label><input type="checkbox" checked><i class="ln c13"></i>KERITESEK_TAMFALAK_FOLDMUVEK_VONALSZERU [0]</label>
                <label><input type="checkbox" checked><i class="sq c14"></i>KOZIGAZGATASI_ALEGYSEG [0]</label>
                <label><input type="checkbox" checked><i class="sq c7"></i>KOZIGAZGATASI_EGYSEG [0]</label>
                <label><input type="checkbox" checked><i class="pt c6"></i>MAGASSAGI_ALAPPONTOK [0]</label>
                <label><input type="checkbox" checked><i class="sq c15"></i>MUVELESBOL_IDOLEGESEN_KIVONT [0]</label>
                <label><input type="checkbox" checked><i class="pt c16"></i>SZIMBOLUMOK [0]</label>
                <label><input type="checkbox" checked><i class="sq c12"></i>SZOLGALMI_JOG_TERULET [0]</label>
                <label><input type="checkbox" checked><i class="sq c13"></i>TEREPTARGYAK_EGYEDI_EPITMENYEK_FELULETSZERU [0]</label>
                <label><input type="checkbox" checked><i class="pt c17"></i>TEREPTARGYAK_EGYEDI_EPITMENYEK_PONTSZERU [0]</label>
                <label><input type="checkbox" checked><i class="ln c8"></i>TEREPTARGYAK_EGYEDI_EPITMENYEK_VONALSZERU [0]</label>
                <label><input type="checkbox" checked><i class="sq c7"></i>TERMOFOLD_MINOSEGI_OSZTALYOK [0]</label>
                <label><input type="checkbox" checked><i class="pt c6"></i>VIZSZINTES_ALAPPONTOK [0]</label>
                <label><input type="checkbox" checked><i class="pt c18"></i>FOLDMINOSITESI_MINTATEREK [0]</label>
            </div>
        </section>

        <div class="map">
            <svg viewBox="386 131 894 538" preserveAspectRatio="xMinYMin slice">
                <path d="M386 131H1100L1280 311V556L1173 449 950 669H386z" fill="#cfb63e" stroke="#5a5020"/>
                <path d="M1100 375l73 74M386 582l12-10M572 577l44 74 14 18M697 577l-81 74-19 18" fill="none" stroke="#4b4012"/>
                <path d="M399 583l68 86h89l42-38-60-73H430z" fill="#b72e3a" stroke="#4b2512"/>
                <path d="M618 659l-13 10h22z" fill="#b72e3a" stroke="#4b2512"/>
                <text x="487" y="604" font-size="8" fill="#5f2a22">2 ép</text>
                <g fill="#7cb86c" stroke="#34632f"><circle cx="598" cy="632" r="2.500"/><circle cx="616.500" cy="651.500" r="2.500"/><circle cx="618" cy="659" r="2.500"/></g>
            </svg>
        </div>
    </main>

    <footer class="status">
        <label class="find"><svg viewBox="0 0 16 16"><circle cx="7" cy="7" r="5" fill="none" stroke="#777" stroke-width="1.500"/><path d="M11 11l4 4" stroke="#777" stroke-width="1.500"/></svg><input type="text" placeholder="Írjon ide a kereséshez (Ctrl+K)"></label>
        <label for="coord">Koordináta</label>
        <input id="coord" class="coord" type="text" value="601287,62 246987,63">
        <svg class="si" viewBox="0 0 16 16"><circle cx="6" cy="6" r="4" fill="#888"/><circle cx="10" cy="10" r="4" fill="#777"/><path d="M2 14L14 2M1 9L9 1M7 15l8-8" stroke="#333" stroke-width="1.500"/></svg>
        <label class="w1" for="scale">Méretarány</label>
        <select id="scale"><option>1:170</option></select>
        <svg class="si lock" viewBox="0 0 16 16"><path d="M4 8V5q0-4 4-4t4 4v3" fill="none" stroke="#777" stroke-width="2"/><path d="M2 7h12v8H2z" fill="#666"/></svg>
        <label for="mag">Nagyító</label>
        <span class="spin"><input id="mag" type="text" value="100%"><i class="ud"></i></span>
        <label class="w2" for="rot">Forgatás</label>
        <span class="spin"><input id="rot" type="text" value="0,0 °"><i class="ud"></i></span>
        <label class="chk"><input type="checkbox" checked>Megjelenít</label>
        <button class="epsg"><svg viewBox="0 0 16 16"><circle cx="8" cy="8" r="7" fill="#777"/><path d="M8 1v14M1 8h14M4 2.500q-3 5.500 0 11M12 2.500q3 5.500 0 11" fill="none" stroke="#ccc"/></svg>EPSG:23700</button>
        <button class="msg" aria-label="Üzenetek"><svg viewBox="0 0 16 16"><ellipse cx="8" cy="7" rx="8" ry="6" fill="#555"/><path d="M8 12l5 4V11z" fill="#555"/><g fill="#eee"><circle cx="4.500" cy="7" r="1.200"/><circle cx="8" cy="7" r="1.200"/><circle cx="11.500" cy="7" r="1.200"/></g></svg></button>
    </footer>

    <footer class="taskbar">
        <div class="apps">
            <button><svg viewBox="0 0 16 16"><path d="M0 0h7.500v7.500H0zM8.500 0H16v7.500H8.500zM0 8.500h7.500V16H0zM8.500 8.500H16V16H8.500z" fill="#56c4f5"/></svg></button>
            <button class="act run"><svg viewBox="0 0 16 16"><path d="M0 1h6l2 2h8v12H0z" fill="#e7aa2c"/><path d="M0 5h16v10H0z" fill="#fbd569"/><path d="M3 10h10v5H3z" fill="#2387cf"/></svg></button>
            <button><svg viewBox="0 0 16 16"><path d="M0 2h16v12H0z" fill="#484848"/><path d="M0 2h16v2.500H0z" fill="#b9b9b9"/><path d="M3 6l3 2.500L3 11M8 11.500h5" fill="none" stroke="#fff" stroke-width="1.500"/></svg></button>
            <button class="run"><svg viewBox="0 0 16 16"><circle cx="8" cy="8" r="8" fill="#e34133"/><path d="M8 8L1 4a8 8 0 0 0 7 12z" fill="#2da94f"/><path d="M8 8v8a8 8 0 0 0 7-12H8z" fill="#fdbd00"/><circle cx="8" cy="8" r="4" fill="#fff"/><circle cx="8" cy="8" r="3.100" fill="#4285f4"/></svg></button>
            <button><svg viewBox="0 0 16 16"><path d="M1 5q4-2 6-4 8-1 9 7t-8 8Q0 15 1 5z" fill="#1f6fca"/><path d="M11 1q6 4 3 10" fill="none" stroke="#6cb9f5" stroke-width="1.500"/><circle cx="8" cy="8" r="4" fill="#e9f3fb"/></svg></button>
            <button class="run"><svg viewBox="0 0 16 16"><path d="M2 1h11v13H2z" fill="#2d72b8"/><path d="M2 5h11M2 9h11M6 1v13" stroke="#6ba5dc"/><path d="M14 6l-7 8" stroke="#d89a35" stroke-width="2.400"/></svg></button>
            <button><svg viewBox="0 0 16 16"><path d="M1 9q1-6 6-6 7-1 7 4t-5 8q-2 1-4-1t-4-5z" fill="#d4202a"/><path d="M8 4l2-3 1 2 4 1-3 3z" fill="#3a9b3a"/></svg></button>
            <button><svg viewBox="0 0 16 16"><path d="M2 2h12v9l-3 3H2z" fill="#fcd116"/><path d="M14 11h-3v3z" fill="#d9a400"/></svg></button>
            <button><svg viewBox="0 0 16 16"><path d="M2 0h12v16H2z" fill="#8a98a5"/><path d="M3.500 1.500h9v3h-9z" fill="#bfe6f5"/><path d="M4 6h2v2H4zM7 6h2v2H7zM10 6h2v2h-2zM4 9h2v2H4zM7 9h2v2H7zM4 12h2v2H4zM7 12h2v2H7z" fill="#e9eef2"/><path d="M10 9h2.500v5H10z" fill="#2a6fb5"/></svg></button>
            <button><svg viewBox="0 0 16 16"><path d="M0 0h13v13H0z" fill="#f4f4f4"/><path d="M2 2h8v8H2z" fill="none" stroke="#c33" stroke-dasharray="1.500 1" stroke-width="1.500"/><path d="M8 7l6 7M15 7l-5 5" stroke="#7fc4ea" stroke-width="1.500"/><circle cx="9" cy="13.500" r="1.800" fill="none" stroke="#4ea1da"/></svg></button>
            <button class="run"><svg viewBox="0 0 16 16"><path d="M0 0h16v16H0z" fill="#b92e32"/><path d="M1 3q6 0 6 5t-6 5M15 3Q9 3 9 8t6 5" fill="none" stroke="#f4dcdc" stroke-width="2.500"/></svg></button>
            <button class="run"><svg viewBox="0 0 16 16"><circle cx="8" cy="8" r="8" fill="#6b2fa0"/><circle cx="8" cy="7.500" r="5" fill="#fff"/><path d="M5 6q3-2 6 0 1 4-3 4T5 6zM7 11h2v4H7z" fill="#6b2fa0"/></svg></button>
            <button><svg viewBox="0 0 16 16"><path d="M0 0h16v16H0z" fill="#a53333"/><text x="1" y="11" font-size="7" font-weight="bold" fill="#f3dede">ITR</text></svg></button>
            <button><svg viewBox="0 0 16 16"><path d="M0 0h7v7H0zM8 0h8v7H8zM0 8h7v8H0z" fill="#666"/><text x="1" y="6" font-size="6" fill="#fff">Y</text><text x="10" y="6" font-size="6" fill="#fff">A</text><text x="1" y="14" font-size="6" fill="#fff">S</text><circle cx="12" cy="12" r="4" fill="#35d095"/></svg></button>
            <button><svg viewBox="0 0 16 16"><rect x="1" y="1" width="14" height="14" rx="2" fill="#f4f7fb"/><path d="M3 3h4v4H3zM9 3h4v9H9z" fill="#2f6fd0"/></svg></button>
            <button class="run"><svg><use href="#qgis"/></svg></button>
            <button class="run"><svg viewBox="0 0 16 16"><circle cx="8" cy="8" r="7" fill="#222" stroke="#bbb" stroke-width="1.200"/><path d="M8 7q-3-1-2-4M9 8q3-1 5 1M7 9q-1 3-4 3M8 8l1 5" fill="none" stroke="#ccc" stroke-width="1.500"/><circle cx="13" cy="3" r="3.700" fill="#e11414"/></svg></button>
            <button class="run"><svg><use href="#npp"/></svg></button>
            <button class="run"><svg viewBox="0 0 16 16"><path d="M2 1h12v14H2z" fill="#4ebfe0"/><path d="M2 1h12v2H2z" fill="#d8e9f0"/><path d="M4 6h8M4 9h8M4 12h8" stroke="#1c6d94"/></svg></button>
            <button class="run"><svg viewBox="0 0 16 16"><path d="M0 0h12l4 4v12H0z" fill="#f08a24"/><path d="M11 4q-5-1-6 3t4 3l2-2H8" fill="none" stroke="#fff" stroke-width="1.500"/><text x="4" y="15" font-size="4" fill="#fff">PDF</text></svg></button>
            <button class="run"><svg><use href="#qgis"/></svg></button>
        </div>
        <div class="tray">
            <svg viewBox="0 0 16 16"><path d="M3 11l5-5 5 5" fill="none" stroke="#fff" stroke-width="2"/></svg>
            <svg viewBox="0 0 16 16"><path d="M1 1h14v14H1z" fill="#3a2a20" stroke="#e07c3c" stroke-width="1.500"/><path d="M6 4v8M10 4v8" stroke="#4db6e2" stroke-width="3"/></svg>
            <svg viewBox="0 0 16 16"><rect x="5.500" y="1" width="5" height="8" rx="2.500" fill="none" stroke="#eee"/><path d="M3 7q0 5 5 5t5-5M8 12v3" fill="none" stroke="#eee"/></svg>
            <svg class="net" viewBox="0 0 16 16"><path d="M11 3H1v9h12V9M4 15h6" fill="none" stroke="#eee" stroke-width="1.300"/><path d="M12 1h3v5h-3z" fill="#eee"/></svg>
            <svg class="snd" viewBox="0 0 16 16"><path d="M2 6h3l4-4v12l-4-4H2zM12 5q2 3 0 6" fill="none" stroke="#eee" stroke-width="1.300"/></svg>
            <time>15:35<br>2024. 04. 21.</time>
            <svg class="bell" viewBox="0 0 16 16"><path d="M2 12q2-1 2-5 0-5 4-6 4 1 4 6 0 4 2 5zM6 13h4q0 2-2 2t-2-2z" fill="#fff"/></svg>
        </div>
    </footer>
</div>

<!-- file manager window over the map -->
<div class="win">
    <div class="tabs">
        <div class="tab"><svg><use href="#desk"/></svg><span>Asztal</span><button aria-label="Lap bezárása"><svg viewBox="0 0 8 8"><path d="M1 1l6 6M7 1L1 7" stroke="#ddd"/></svg></button></div>
        <button class="add" aria-label="Új lap"><svg viewBox="0 0 8 8"><path d="M4 .5v7M.5 4h7" stroke="#ddd"/></svg></button>
        <div class="ctl">
            <button aria-label="Kis méret"><svg viewBox="0 0 8 8"><path d="M.5 4.500h7" stroke="#ddd"/></svg></button>
            <button aria-label="Teljes méret"><svg viewBox="0 0 8 8"><path d="M1 1h6v6H1z" fill="none" stroke="#ddd"/></svg></button>
            <button aria-label="Bezárás"><svg viewBox="0 0 8 8"><path d="M.8.8l6.400 6.400M7.200.8L.8 7.200" stroke="#ddd"/></svg></button>
        </div>
    </div>
    <div class="addr">
        <button><svg viewBox="0 0 10 10"><path d="M9.500 5h-8M5 1.500L1.200 5 5 8.500" fill="none" stroke="#ddd"/></svg></button>
        <button class="dim"><svg viewBox="0 0 10 10"><path d="M.5 5h8M5 1.500L8.800 5 5 8.500" fill="none" stroke="#ddd"/></svg></button>
        <button><svg viewBox="0 0 10 10"><path d="M5 9.500v-8M1.500 5L5 1.200 8.500 5" fill="none" stroke="#ddd"/></svg></button>
        <button><svg viewBox="0 0 10 10"><path d="M9 5a4 4 0 1 1-1.500-3.200M8.500.5v2.300H6" fill="none" stroke="#ddd"/></svg></button>
        <div class="path"><svg viewBox="0 0 12 12"><path d="M1 1.500h10v7H1zM3 10.500h6M4.500 8.500v2M7.500 8.500v2" fill="none" stroke="#ccc"/></svg><svg class="ar" viewBox="0 0 4 8"><path d="M.5 1l3 3-3 3" fill="none" stroke="#ddd"/></svg><a href="#">Asztal</a><svg class="ar" viewBox="0 0 4 8"><path d="M.5 1l3 3-3 3" fill="none" stroke="#ddd"/></svg></div>
        <label class="srch"><input type="text" placeholder="Keresés: Asztal"><svg viewBox="0 0 10 10"><circle cx="4" cy="4" r="3" fill="none" stroke="#ddd"/><path d="M6.300 6.300L9.500 9.500" stroke="#ddd"/></svg></label>
    </div>
    <div class="cmd">
        <button class="cnew"><svg viewBox="0 0 12 12"><circle cx="6" cy="6" r="5" fill="none" stroke="#bbb"/><path d="M6 3.500v5M3.500 6h5" stroke="#bbb"/></svg>Új<svg class="cv"><use href="#chev"/></svg></button>
        <i></i>
        <button class="ib"><svg viewBox="0 0 12 12"><path d="M3 1l4.500 7.500M9 1L4.500 8.500" stroke="#bbb"/><circle cx="3" cy="9.500" r="1.700" fill="none" stroke="#4cb6de"/><circle cx="9" cy="9.500" r="1.700" fill="none" stroke="#4cb6de"/></svg></button>
        <button class="ib"><svg viewBox="0 0 12 12"><rect x="4.500" y="1" width="6.500" height="8" rx="1.500" fill="none" stroke="#4cb6de"/><path d="M3.500 3.500H2.500Q1 3.500 1 5v4.500Q1 11 2.500 11H6q1.500 0 1.500-1.500" fill="none" stroke="#bbb"/></svg></button>
        <button class="ib dim"><svg viewBox="0 0 12 12"><path d="M5 11H2V2h7v2M4 1h3v2H4zM6 5h5v6H6z" fill="none" stroke="#bbb"/></svg></button>
        <button class="ib"><svg viewBox="0 0 12 12"><path d="M8 2.500H2Q1 2.500 1 3.500v5q0 1 1 1h6M10 2.500q1 0 1 1v5q0 1-1 1" fill="none" stroke="#4cb6de"/><path d="M3 8l1.500-4L6 8M8.700 1v10" fill="none" stroke="#ddd"/></svg></button>
        <button class="ib"><svg><use href="#share"/></svg></button>
        <button class="ib"><svg viewBox="0 0 12 12"><path d="M1 2.500h10M4.500 2.500Q4.500 1 6 1t1.500 1.500M2 2.500l1 8.500h6l1-8.500M5 5v3.500M7 5v3.500" fill="none" stroke="#ccc"/></svg></button>
        <i></i>
        <button class="tx"><svg viewBox="0 0 12 12"><path d="M3.500 11V2M1 4.500L3.500 2 6 4.500" fill="none" stroke="#ccc"/><path d="M8.500 1v9M6.500 7.500l2 2.500L11 7.500" fill="none" stroke="#4cb6de"/></svg>Rendezés<svg class="cv"><use href="#chev"/></svg></button>
        <button class="tx"><svg viewBox="0 0 12 12"><path d="M.5 2.500h11M.5 5h11M.5 7.500h11M.5 10h11" stroke="#ccc"/></svg>Megtekintés<svg class="cv"><use href="#chev"/></svg></button>
        <i></i>
        <button class="ib"><svg viewBox="0 0 12 12"><g fill="#fff"><circle cx="1.500" cy="6" r="1.200"/><circle cx="6" cy="6" r="1.200"/><circle cx="10.500" cy="6" r="1.200"/></g></svg></button>
        <button class="det"><svg viewBox="0 0 12 12"><rect x=".5" y="2" width="11" height="8" rx="1.500" fill="none" stroke="#bbb"/><path d="M7.500 2H10q1.500 0 1.500 1.500v5Q11.500 10 10 10H7.500z" fill="#164a5c" stroke="#4cb6de"/></svg>Részletek</button>
    </div>
    <div class="cont">
        <nav class="places">
            <a href="#"><svg><use href="#home"/></svg>Kezdőképernyő</a>
            <a href="#"><svg><use href="#pics"/></svg>Gyűjtemény</a>
            <hr>
            <a href="#" class="pd"><svg><use href="#folder"/></svg>QuickAccess<svg><use href="#pin"/></svg></a>
            <a href="#" class="pd"><svg><use href="#folder"/></svg>Programok<svg><use href="#pin"/></svg></a>
            <a href="#" class="pd"><svg><use href="#folderdl"/></svg>Download<svg><use href="#pin"/></svg></a>
            <a href="#" class="pd"><svg><use href="#dl"/></svg>Letöltések<svg><use href="#pin"/></svg></a>
            <a href="#" class="pd"><svg><use href="#doc"/></svg>Dokumentumok<svg><use href="#pin"/></svg></a>
            <a href="#" class="pd"><svg><use href="#pics"/></svg>Képek<svg><use href="#pin"/></svg></a>
            <a href="#" class="pd"><svg><use href="#folder"/></svg>FaludiZ<svg><use href="#pin"/></svg></a>
            <a href="#" class="pd"><svg><use href="#drive"/></svg>DATA (D:)<svg><use href="#pin"/></svg></a>
            <a href="#" class="pd"><svg><use href="#folder"/></svg>IntelliGEO<svg><use href="#pin"/></svg></a>
            <a href="#" class="pd"><svg><use href="#music"/></svg>Zenék<svg><use href="#pin"/></svg></a>
            <a href="#" class="pd"><svg><use href="#video"/></svg>Videók<svg><use href="#pin"/></svg></a>
            <a href="#" class="pd"><svg><use href="#folder"/></svg>e-ing<svg><use href="#pin"/></svg></a>
            <a href="#" class="pd here"><svg><use href="#desk"/></svg>Asztal<svg><use href="#pin"/></svg></a>
            <a href="#" class="pd"><svg><use href="#folder"/></svg>GML<svg><use href="#pin"/></svg></a>
            <a href="#" class="pd"><svg><use href="#folder"/></svg>2-Munka<svg><use href="#pin"/></svg></a>
            <hr>
            <a href="#"><svg><use href="#dropbox"/></svg>Dropbox</a>
            <a href="#"><svg><use href="#pc"/></svg>Ez a gép</a>
            <a href="#" class="sub"><svg><use href="#sysdrive"/></svg>Helyi lemez (C:)</a>
        </nav>
        <div class="vscroll"></div>
        <div class="list">
            <table>
                <thead>
                    <tr><th class="n">Név</th><th class="d">Módosítás dátuma</th><th>Típus</th></tr>
                </thead>
                <tbody>
                    <tr><td><svg><use href="#folder"/></svg>Scan</td><td>2024. 04. 10. 16:58</td><td>Fájlmappa</td></tr>
                    <tr><td><svg><use href="#folder"/></svg>stuff</td><td>2024. 04. 21. 14:05</td><td>Fájlmappa</td></tr>
                    <tr><td><svg><use href="#npp"/></svg>4801.gml</td><td>2024. 04. 19. 10:36</td><td>GML fájl</td></tr>
                    <tr><td><svg><use href="#zip"/></svg>qgis-gml-plugin-import_v10.zip</td><td>2024. 04. 21. 13:13</td><td>Tömörített mappa</td></tr>
                    <tr class="hov"><td><svg><use href="#file"/></svg>4801.gfs</td><td>2024. 04. 21. 15:18</td><td>GFS fájl</td></tr>
                    <tr><td><svg><use href="#file"/></svg>4801.gpkg</td><td>2024. 04. 21. 15:22</td><td>GPKG fájl</td></tr>
                    <tr><td><svg><use href="#npp"/></svg>4801.gpkg.aux.xml</td><td>2024. 04. 21. 15:34</td><td>XML fájl</td></tr>
                    <tr><td><svg><use href="#file"/></svg>4801.gpkg-wal</td><td>2024. 04. 21. 15:34</td><td>GPKG-WAL fájl</td></tr>
                    <tr><td><svg><use href="#file"/></svg>4801.gpkg-shm</td><td>2024. 04. 21. 15:22</td><td>GPKG-SHM fájl</td></tr>
                    <tr class="seld"><td><svg><use href="#npp"/></svg>4801_export.gml</td><td>2024. 04. 21. 15:35</td><td>GML fájl</td></tr>
                </tbody>
            </table>
            <div class="hscroll"></div>
        </div>
        <aside class="info">
            <div class="prev">
                <svg viewBox="0 0 60 62">
                    <defs><linearGradient id="gr" x1="0" y1="0" x2="0" y2="1"><stop offset="0" stop-color="#f4f4f4"/><stop offset=".4" stop-color="#e8efc0"/><stop offset=".65" stop-color="#9fdc32"/><stop offset="1" stop-color="#22a832"/></linearGradient></defs>
                    <path d="M2 6h27l12 11 5 39-44 4z" fill="url(#gr)" stroke="#ddd"/>
                    <path d="M3 6h27" stroke="#555" stroke-width="3" stroke-dasharray="1 1.500"/>
                    <path d="M8 27q3-7 11-6l3 6-6 3q-6 2-8-3z" fill="#5cc14e" stroke="#222"/>
                    <path d="M5 31q9-2 20 1M11 33q-5 5 1 6t2-5" fill="none" stroke="#222" stroke-width="1.500"/>
                    <circle cx="18" cy="22" r="3" fill="#fff" stroke="#222"/><circle cx="22" cy="24" r="2.500" fill="#fff" stroke="#222"/>
                    <path d="M17 44v-9q5 1 3 9m4-5q3 0 2 5t-3-1m6-8v9m4-4q3 1 1 4m4-5v8m0-8q3 1 0 4m3-4q2 1 1 4" fill="none" stroke="#26501c"/>
                    <path d="M57 3L43 34" stroke="#e5ae2e" stroke-width="3"/><path d="M58 1l-2 4" stroke="#a34c4c" stroke-width="3"/><path d="M43.500 32l-2 5" stroke="#6b4a22" stroke-width="1.500"/>
                </svg>
            </div>
            <div class="meta">
                <h3><svg><use href="#npp"/></svg>4801_export.gml</h3>
                <button><svg><use href="#share"/></svg>Megosztás</button>
                <h4>Részletek</h4>
                <dl>
                    <dt>Típus</dt><dd>GML fájl</dd>
                    <dt>Méret</dt><dd>52.3 KB</dd>
                    <dt>Fájl helye</dt><dd>C:\Felhasználók\Zoltan\Asztal</dd>
                    <dt>Módosítás dátuma</dt><dd>2024. 04. 21. 15:35</dd>
                </dl>
                <button><svg viewBox="0 0 12 12"><path d="M1.500 9l4-4Q5 2 7.500 1.200L9 1 7.500 3 9 4.500 11 3q.5 4-4 4.500l-4 4Q1 11.500 1.500 9z" fill="none" stroke="#ccc"/></svg>Tulajdonságok</button>
            </div>
        </aside>
    </div>
    <div class="foot">
        <span>10 elem</span><b></b><span>1 kijelölt elem - 52.3 KB</span><b></b>
        <button class="v1" aria-label="Részletek nézet"><svg viewBox="0 0 10 10"><path d="M1 1.500h8M1 4h8M1 6.500h8M1 9h8" stroke="#333"/></svg></button>
        <button class="v2" aria-label="Nagy ikonok"><svg viewBox="0 0 10 10"><path d="M.5 .5h9v9h-9z" fill="#444" stroke="#bbb"/><path d="M2 2h6v5H2z" fill="#fff"/></svg></button>
    </div>
</div>

<svg class="mouse" viewBox="0 0 8 12"><path d="M.5.5v10l2.300-2 1.700 3 1.300-.6L4.500 8h3z" fill="#fff" stroke="#333" stroke-width=".4"/></svg>

<!-- gear and globe emblem -->
<svg class="mark" viewBox="-83 -83 166 166">
    <g fill="#828282">
        <path fill-rule="evenodd" d="M0-62a62 62 0 1 0 .1 0zM0-49a49 49 0 1 1-.1 0z"/>
        <g id="t4"><path id="t1" d="M-9.500-60L-6.500-83h13l3 23z"/><use href="#t1" transform="rotate(30)"/><use href="#t1" transform="rotate(60)"/></g>
        <use href="#t4" transform="rotate(90)"/><use href="#t4" transform="rotate(180)"/><use href="#t4" transform="rotate(270)"/>
    </g>
    <g fill="none" stroke="#828282" stroke-width="4" transform="rotate(-23)">
        <path d="M0-49V49M-49 0H49M0-49Q-56 0 0 49M0-49Q56 0 0 49M-39-30Q0-6 39-30M-39 30Q0 6 39 30"/>
    </g>
</svg>
</body>
</html>
```

FILE: styles.css
```css
* {
    box-sizing: border-box;
}

body {
    margin: 0;
    background: #f0f0f0;
    font: 7px/12px "Noto Sans", "Open Sans", sans-serif;
    color: #333;
    overflow: hidden;
}

button, input, select {
    font: inherit;
    color: inherit;
    margin: 0;
    padding: 0;
    border: 0;
    background: none;
}

a {
    color: inherit;
    text-decoration: none;
}

i, b {
    font-style: normal;
    font-weight: normal;
}

.defs {
    display: none;
}

.screen {
    display: flex;
    flex-direction: column;
    height: 100vh;
}

/* title and menu */
.title {
    display: flex;
    align-items: center;
    height: 15px;
    padding-left: 1px;
}

.title .logo {
    width: 12px;
    height: 12px;
}

.title h1 {
    flex: 1;
    margin: 0 0 0 3px;
    font: 8px/12px Roboto, sans-serif;
    color: #777;
}

.wbtn {
    display: flex;
    color: #aaa;
}

.wbtn span {
    width: 30px;
    text-align: center;
}

.menu {
    display: flex;
    gap: 9px;
    height: 12px;
    padding-left: 6px;
    color: #888;
}

.menu a::first-letter {
    text-decoration: underline;
}

/* toolbars */
.bar {
    display: flex;
    align-items: center;
    height: 26px;
    padding-left: 8px;
    border-top: 1px solid #dcdcdc;
    background: linear-gradient(#fcfcfc, #f1f1f1);
}

.tb {
    display: flex;
    flex: none;
    align-items: center;
    justify-content: center;
    width: 22px;
    height: 22px;
}

.tb svg {
    width: 16px;
    height: 16px;
}

.tb.on {
    border: 1px solid #bbb;
    border-radius: 2px;
    background: #dadada;
}

.tb.off svg {
    opacity: .4;
    filter: grayscale(1);
}

.tb.drop {
    width: 30px;
    justify-content: flex-start;
    padding-left: 3px;
}

.tb.drop::after, .more::after, .pdrop::after {
    content: "";
    margin-left: 4px;
    border: 3px solid transparent;
    border-top-color: #666;
    border-bottom: 0;
}

.tb.off::after {
    opacity: .7;
}

.sep {
    flex: none;
    width: 11px;
    height: 16px;
    background: linear-gradient(#ddd, #ddd) 5px 0 / 1px 100% no-repeat;
}

.sep.thin {
    width: 5px;
    background-position: 2px 0;
}

.spin {
    display: flex;
    align-items: center;
    width: 56px;
    height: 14px;
    padding-left: 3px;
    border: 1px solid #bbb;
    border-radius: 2px;
    background: #fff;
}

.spin input {
    flex: 1;
    min-width: 0;
}

.clear {
    width: 9px;
    height: 7px;
    margin-right: 7px;
}

.ud {
    position: relative;
    align-self: stretch;
    width: 9px;
    border-left: 1px solid #ccc;
}

.ud::before, .ud::after {
    content: "";
    position: absolute;
    left: 2px;
    top: 2px;
    border: 2px solid transparent;
    border-bottom: 3px solid #555;
    border-top: 0;
}

.ud::after {
    top: 7px;
    border-top: 3px solid #555;
    border-bottom: 0;
}

select {
    appearance: none;
    height: 14px;
    padding-left: 3px;
    border: 1px solid #bbb;
    border-radius: 2px;
    background: #fff url("data:image/svg+xml,%3Csvg xmlns='http://www.w3.org/2000/svg' width='6' height='4'%3E%3Cpath d='M0 0h6L3 4z' fill='%23555'/%3E%3C/svg%3E") right 3px center no-repeat;
}

.unit {
    width: 62px;
    margin-left: 1px;
}

/* work area */
.work {
    display: flex;
    flex: 1;
    min-height: 0;
    border-top: 1px solid #c9c9c9;
}

.side {
    width: 35px;
    padding-top: 7px;
    border-right: 1px solid #bbb;
    background: linear-gradient(90deg, #fafafa, #efefef);
}

.side-a, .side-b {
    display: flex;
    flex-direction: column;
}

.side-a {
    height: 235px;
    border-bottom: 1px solid #ddd;
}

.side-b {
    height: 149px;
    margin: 10px 4px 0 3px;
}

.side button {
    display: flex;
    flex: 1;
    align-items: center;
    padding-left: 6px;
}

.side svg {
    width: 16px;
    height: 16px;
}

.more::after {
    margin-left: 3px;
}

.panel {
    display: flex;
    flex-direction: column;
    width: 348px;
    border-right: 1px solid #bbb;
}

.panel h2 {
    margin: 0;
    padding: 0 2px;
    font-size: 7px;
    font-weight: normal;
}

.ptools {
    display: flex;
    gap: 6px;
    height: 21px;
    padding: 0 4px;
}

.ptools button {
    display: flex;
    align-items: center;
}

.ptools svg {
    width: 11px;
    height: 11px;
}

.tree {
    flex: 1;
    overflow: hidden;
    border-top: 1px solid #ccc;
    background: #fff;
    font-family: "Liberation Sans", Arial, sans-serif;
    font-weight: bold;
    color: #111;
    white-space: nowrap;
}

.tree label {
    display: flex;
    align-items: center;
    gap: 4px;
    height: 12px;
    padding-left: 29px;
}

.tree .root {
    padding-left: 5px;
    font-family: inherit;
    font-size: 8px;
    font-weight: normal;
}

.root svg {
    width: 9px;
    height: 9px;
}

.tw {
    margin-right: 1px;
    border: 3px solid transparent;
    border-top-color: #555;
    border-bottom: 0;
}

.cur {
    background: #efefef;
}

input[type="checkbox"] {
    appearance: none;
    flex: none;
    width: 9px;
    height: 9px;
    border: 1px solid #c9c9c9;
    background: #fff url("data:image/svg+xml,%3Csvg xmlns='http://www.w3.org/2000/svg' viewBox='0 0 8 8'%3E%3Cpath d='M1.500 4l1.700 2.500L6.500 1' fill='none' stroke='%23000' stroke-width='1.500'/%3E%3C/svg%3E") center / 8px;
}

.sq {
    width: 11px;
    height: 11px;
    border: 1px solid #0003;
}

.pt {
    width: 5px;
    height: 5px;
    margin: 0 3px;
    border-radius: 50%;
}

.ln {
    width: 10px;
    height: 1px;
}

.c1 { background: #8b4a3f; }
.c2 { background: #6fa35a; }
.c3 { background: #8577a8; }
.c4 { background: #b82a36; }
.c5 { background: #cfb43a; }
.c6 { background: #b0344b; }
.c7 { background: #da3d88; }
.c8 { background: #c4a0a4; }
.c9 { background: #7cc46e; }
.c10 { background: #dc7e96; }
.c11 { background: #c0607a; }
.c12 { background: #ee94b2; }
.c13 { background: #e0608c; }
.c14 { background: #8c70b6; }
.c15 { background: #8c4a2c; }
.c16 { background: #ad9c48; }
.c17 { background: #94405d; }
.c18 { background: #7fa978; }

.map {
    flex: 1;
    min-width: 0;
    margin-left: 3px;
    background: #fff;
}

.map svg {
    display: block;
    width: 100%;
    height: 100%;
}

/* status bar */
.status {
    display: flex;
    align-items: center;
    height: 19px;
    padding: 0 5px 0 2px;
    border-top: 1px solid #ddd;
}

.status label {
    margin-right: 3px;
}

.status .find {
    display: flex;
    align-items: center;
    width: 177px;
    height: 15px;
    margin-right: auto;
    padding-left: 6px;
    border: 1px solid #bbb;
    background: #fff;
}

.find svg {
    width: 9px;
    height: 9px;
    margin-right: 4px;
}

.find input {
    flex: 1;
}

.find input::placeholder {
    color: #777;
}

.coord {
    width: 83px;
    height: 14px;
    padding-left: 3px;
    border: 1px solid #bbb;
    background: #fff;
}

.si {
    width: 10px;
    height: 10px;
    margin: 0 4px;
}

.lock {
    margin-left: 8px;
}

#scale {
    width: 54px;
}

.w2 {
    margin-left: 5px;
}

.status .chk {
    display: flex;
    align-items: center;
    gap: 3px;
    margin: 0 14px 0 4px;
}

.chk input[type="checkbox"] {
    border: 0;
}

.epsg {
    display: flex;
    align-items: center;
    gap: 2px;
}

.epsg svg {
    width: 8px;
    height: 8px;
}

.msg {
    display: flex;
    margin-left: 15px;
}

.msg svg {
    width: 10px;
    height: 10px;
}

/* taskbar */
.taskbar {
    display: flex;
    justify-content: space-between;
    height: 32px;
    background: linear-gradient(90deg, #152233, #2a2a2a 12%, #2a2a2a 88%, #0e2a40);
}

.apps {
    display: flex;
    width: 615px;
    margin-left: 7px;
}

.apps button {
    display: flex;
    position: relative;
    flex: 1;
    align-items: center;
    justify-content: center;
}

.apps svg {
    width: 16px;
    height: 16px;
}

.apps .act {
    margin: 3px 2px;
    border-radius: 3px;
    background: #ffffff14;
}

.run::after {
    content: "";
    position: absolute;
    left: calc(50% - 2px);
    bottom: 3px;
    width: 4px;
    height: 2px;
    border-radius: 1px;
    background: #aaa;
}

.act::after {
    left: calc(50% - 5px);
    bottom: 0;
    width: 10px;
    background: #ddd;
}

.tray {
    display: flex;
    align-items: center;
    gap: 11px;
    padding-right: 13px;
    color: #fff;
}

.tray svg {
    width: 10px;
    height: 10px;
}

.tray .snd {
    margin-left: -6px;
}

.tray time {
    width: 53px;
    margin-left: -5px;
    font: 8px/11px Roboto, sans-serif;
    text-align: right;
}

.tray .bell {
    margin-left: -6px;
}

/* file manager */
.win {
    position: absolute;
    display: flex;
    flex-direction: column;
    left: 326px;
    right: 151px;
    top: 115px;
    bottom: 144px;
    overflow: hidden;
    border: 1px solid #3a3a3a;
    border-radius: 5px;
    background: #191919;
    box-shadow: 0 10px 24px #0009;
    font: 8px/12px Roboto, sans-serif;
    color: #e6e6e6;
}

.win button svg {
    width: 10px;
    height: 10px;
}

.tabs {
    display: flex;
    height: 25px;
    padding: 4px 0 0 5px;
    background: #010c0f;
}

.tab {
    display: flex;
    align-items: center;
    width: 160px;
    padding: 0 10px 0 5px;
    border-radius: 4px 4px 0 0;
    background: #1a2224;
}

.tab svg {
    width: 11px;
    height: 11px;
    margin-right: 7px;
}

.tab span {
    flex: 1;
}

.tab button {
    display: flex;
}

.win .tab button svg {
    width: 7px;
    height: 7px;
    margin: 0;
}

.add {
    padding: 0 10px;
}

.win .add svg, .win .ctl svg {
    width: 8px;
    height: 8px;
}

.ctl {
    display: flex;
    margin: -4px 0 0 auto;
    height: 20px;
}

.ctl button {
    width: 30px;
}

.addr {
    display: flex;
    align-items: center;
    height: 33px;
    padding-right: 8px;
    border-bottom: 1px solid #2c3436;
    background: #1a2224;
}

.addr button {
    display: flex;
    justify-content: center;
    width: 32px;
}

.dim {
    opacity: .35;
}

.path {
    display: flex;
    flex: 1;
    align-items: center;
    gap: 12px;
    height: 22px;
    margin: 0 6px;
    padding-left: 8px;
    border-radius: 2px;
    background: #252d2f;
}

.path svg {
    width: 11px;
    height: 11px;
}

.path .ar {
    width: 4px;
    height: 8px;
}

.srch {
    display: flex;
    align-items: center;
    width: 188px;
    height: 22px;
    padding: 0 7px 0 9px;
    border-radius: 2px;
    background: #252d2f;
}

.srch input {
    flex: 1;
}

.srch input::placeholder {
    color: #ccc;
}

.srch svg {
    width: 9px;
    height: 9px;
}

.cmd {
    display: flex;
    align-items: center;
    height: 35px;
    padding: 0 16px 0 12px;
}

.cmd button {
    display: flex;
    align-items: center;
    justify-content: center;
}

.cmd .cv {
    width: 7px;
    height: 7px;
}

.cmd i {
    width: 1px;
    height: 18px;
    background: #333;
}

.cmd .cnew {
    justify-content: flex-start;
    gap: 5px;
    width: 45px;
    padding-left: 1px;
}

.ib {
    width: 32px;
}

.cmd .ib svg {
    width: 12px;
    height: 12px;
}

.tx {
    gap: 5px;
    margin-left: 12px;
}

.tx + .tx {
    margin: 0 10px 0 17px;
}

.cmd .det {
    gap: 6px;
    margin-left: auto;
}

.cont {
    display: flex;
    flex: 1;
    min-height: 0;
    border-top: 1px solid #333;
}

.places {
    width: 150px;
    padding-top: 3px;
    overflow: hidden;
}

.places a {
    display: flex;
    align-items: center;
    gap: 3px;
    height: 16px;
    padding: 0 1px 0 16px;
}

.places svg {
    width: 11px;
    height: 11px;
}

.places .pd svg:last-child {
    width: 8px;
    height: 8px;
    margin-left: auto;
}

.places .here {
    background: #303030;
}

.places .sub {
    padding-left: 21px;
}

.places hr {
    height: 1px;
    margin: 8px 5px 7px;
    border: 0;
    background: #333;
}

.vscroll {
    width: 13px;
    border-right: 1px solid #333;
    background: linear-gradient(#9a9a9a, #9a9a9a) 5px 11px / 2px 252px no-repeat;
}

.list {
    display: flex;
    flex-direction: column;
    width: 323px;
    padding-left: 10px;
    overflow: hidden;
    border-right: 1px solid #2c2c2c;
}

table {
    width: 100%;
    table-layout: fixed;
    border-collapse: collapse;
}

th, td {
    height: 14px;
    padding: 0 0 0 4px;
    overflow: hidden;
    text-align: left;
    font-weight: normal;
    white-space: nowrap;
}

th {
    height: 17px;
    border-right: 1px solid #555;
}

th:last-child {
    border: 0;
}

.n {
    width: 172px;
    padding-left: 2px;
    background: url("data:image/svg+xml,%3Csvg xmlns='http://www.w3.org/2000/svg' width='6' height='4'%3E%3Cpath d='M0 3.500l3-3 3 3' fill='none' stroke='%23999'/%3E%3C/svg%3E") 82px 0 no-repeat;
}

.d {
    width: 96px;
}

thead::after {
    content: "";
    display: block;
    height: 4px;
}

td:first-child {
    padding-left: 2px;
}

td + td {
    font-size: 7px;
    color: #c4c4c4;
}

td svg {
    width: 11px;
    height: 11px;
    margin-right: 3px;
    vertical-align: -3px;
}

.hov {
    background: #4c4c4c;
}

.seld {
    background: #777;
}

.seld td + td, .hov td + td {
    color: #ddd;
}

.hscroll {
    width: 230px;
    height: 2px;
    margin: auto 0 4px 2px;
    background: #9a9a9a;
}

.info {
    flex: 1;
    min-width: 0;
}

.prev {
    display: flex;
    align-items: center;
    justify-content: center;
    height: 147px;
    background: #222;
}

.prev svg {
    width: 60px;
    height: 62px;
}

.meta {
    padding: 16px 13px 0 15px;
}

.meta h3 {
    display: flex;
    align-items: center;
    gap: 9px;
    height: 18px;
    margin: 0 0 11px;
    font-size: 11px;
    font-weight: 500;
    color: #fff;
}

.meta h3 svg {
    width: 18px;
    height: 18px;
}

.meta button {
    display: flex;
    align-items: center;
    gap: 6px;
    height: 19px;
    padding: 0 8px;
    border-radius: 3px;
    background: #232323;
}

.meta h4 {
    margin: 21px 0 6px;
    font-size: 8px;
    color: #fff;
}

dl {
    display: grid;
    grid-template-columns: auto 1fr;
    margin: 0 0 9px;
    line-height: 15px;
    color: #c4c4c4;
}

dd {
    margin: 0;
    text-align: right;
}

.foot {
    display: flex;
    align-items: center;
    gap: 6px;
    height: 16px;
    padding: 0 4px 0 9px;
    background: #1c1c1c;
}

.foot b {
    width: 1px;
    height: 8px;
    background: #ccc;
}

.foot button {
    display: flex;
    align-items: center;
    justify-content: center;
    width: 14px;
    height: 15px;
}

.foot .v1 {
    margin-left: auto;
    background: #b4b4b4;
}

.foot .v2 {
    margin-left: -6px;
}

.mouse {
    position: absolute;
    left: 561px;
    top: 312px;
    width: 8px;
    height: 12px;
}

.mark {
    position: absolute;
    right: 8px;
    bottom: 7px;
    width: 166px;
    height: 166px;
    opacity: .38;
}
```
